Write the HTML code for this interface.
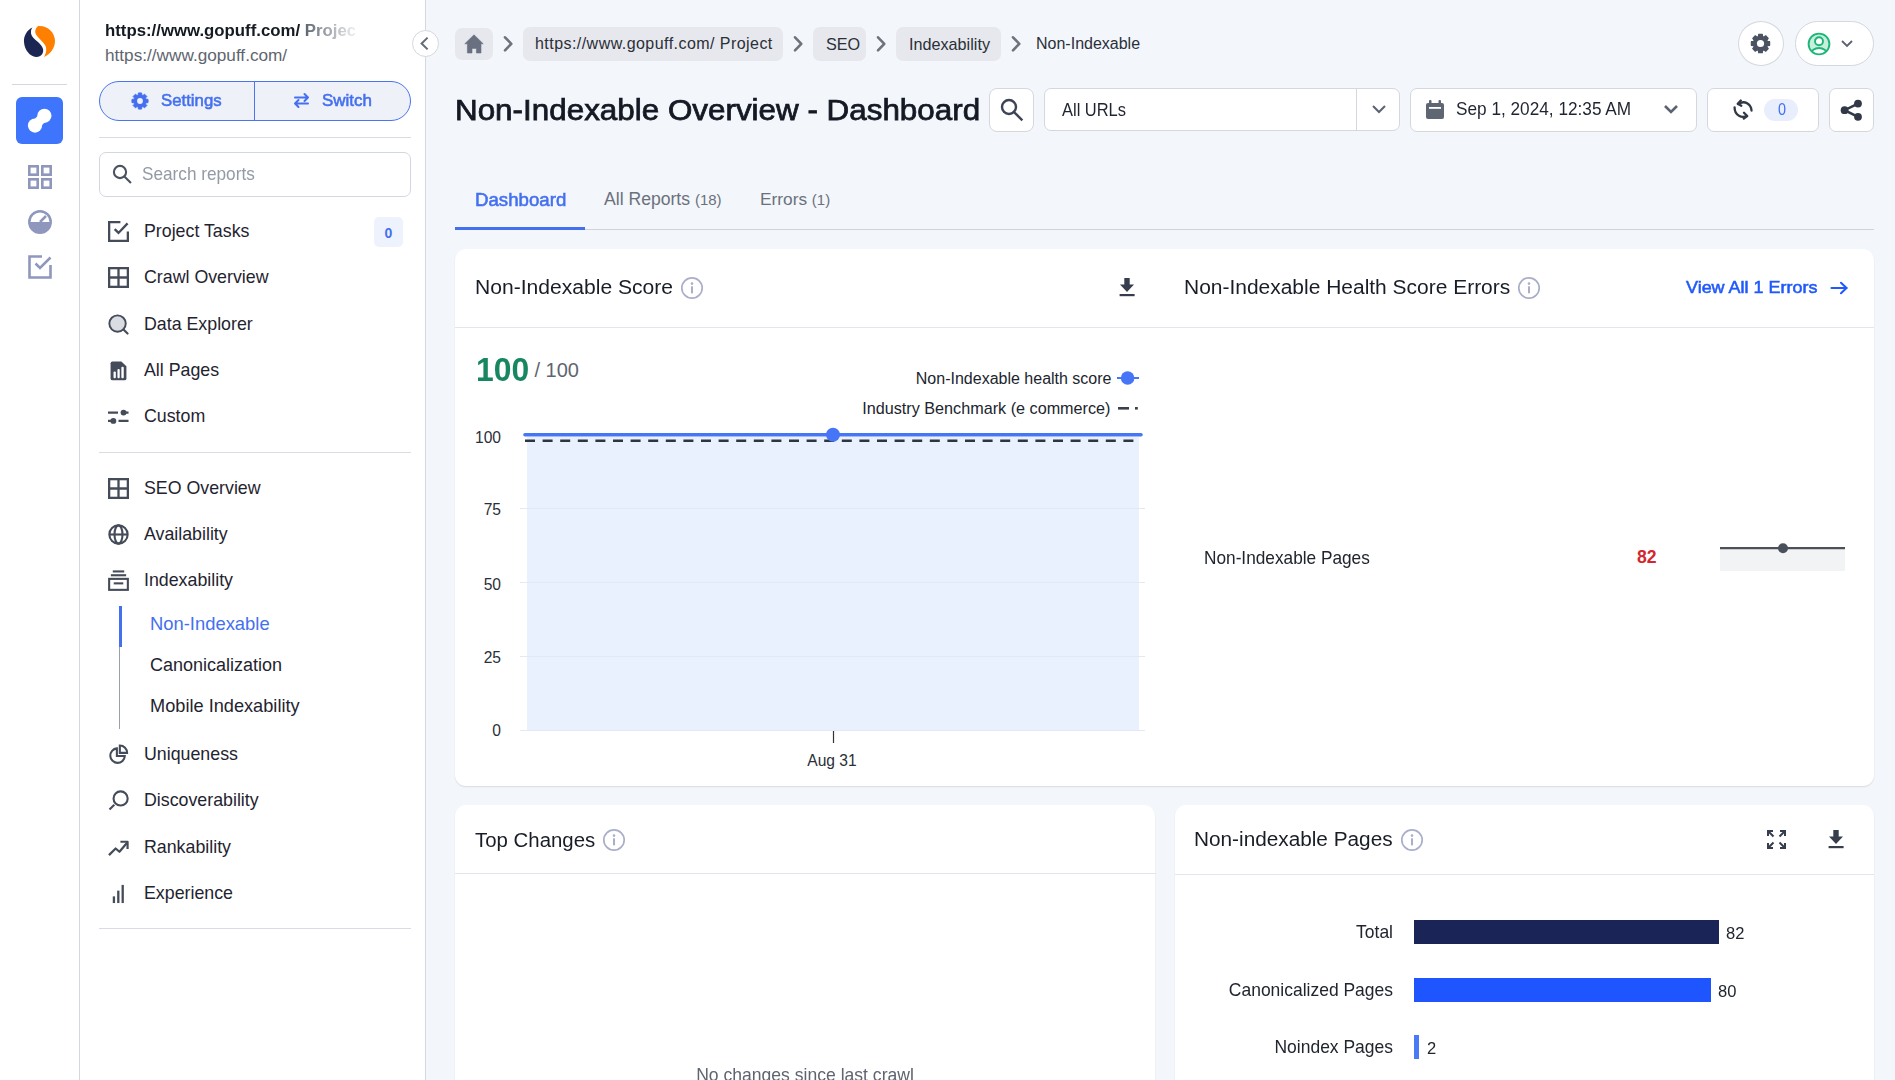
<!DOCTYPE html>
<html><head><meta charset="utf-8">
<style>
*{box-sizing:border-box;margin:0;padding:0}
html,body{width:1895px;height:1080px;overflow:hidden;background:#f3f6fb;font-family:"Liberation Sans",sans-serif;color:#1f2330}
.abs{position:absolute}
.t{position:absolute;white-space:nowrap;line-height:1}
</style></head>
<body>
<div class="abs" style="left:0px;top:0px;width:80px;height:1080px;background:#fff;border-right:1px solid #d4d7de"></div>
<div class="abs" style="left:80px;top:0px;width:346px;height:1080px;background:#fff;border-right:1px solid #d4d7de"></div>
<svg class="abs" style="left:23px;top:25px" width="33" height="33" viewBox="0 0 33 33"><path fill="#1c2653" d="M9.5 2.5 C4 5 0.5 11 1 17 C1.5 25 7 31.5 13 32 C18 32.3 21 28 20 24 C19 20 15 17 12 14.5 C9 12 7.5 9 8 6 C8.2 4.5 8.8 3.2 9.5 2.5 Z"/>
<path fill="#ff7f00" d="M15 1 C24 0 32 7 32 16 C32 23 27.5 29 21 32 C23.5 28 24 23 22 20 C20 17 16.5 14 14 11 C11.5 8 11.5 4 15 1 Z"/></svg>
<div class="abs" style="left:12px;top:84px;width:55px;height:1px;background:#d4d7de"></div>
<div class="abs" style="left:16px;top:97px;width:47px;height:47px;background:#3f74fc;border-radius:6px"></div>
<svg class="abs" style="left:27px;top:108px" width="26" height="26" viewBox="0 0 26 26"><g fill="#fff"><circle cx="8" cy="17.6" r="7.1"/><circle cx="17.4" cy="7.8" r="7.1"/></g><path d="M8 17.6 L17.4 7.8" stroke="#fff" stroke-width="9.5"/></svg>
<svg class="abs" style="left:28px;top:165px" width="24" height="24" viewBox="0 0 24 24"><g fill="none" stroke="#8f97bd" stroke-width="2.6"><rect x="1.3" y="1.3" width="8.4" height="8.4"/><rect x="14.3" y="1.3" width="8.4" height="8.4"/><rect x="1.3" y="14.3" width="8.4" height="8.4"/><rect x="14.3" y="14.3" width="8.4" height="8.4"/></g></svg>
<svg class="abs" style="left:28px;top:210px" width="24" height="24" viewBox="0 0 24 24"><circle cx="12" cy="12" r="10.7" fill="none" stroke="#8f97bd" stroke-width="2.5"/><path d="M1 12 A11 11 0 0 0 23 12 Z" fill="#8f97bd"/><path d="M12 12 L18 6" stroke="#8f97bd" stroke-width="2.5"/></svg>
<svg class="abs" style="left:28px;top:255px" width="24" height="24" viewBox="0 0 24 24"><path d="M14 1.5 H1.5 V22.5 H22.5 V10" fill="none" stroke="#8f97bd" stroke-width="2.6"/><path d="M7.5 8.5 L12 13 L22.5 2.5" fill="none" stroke="#8f97bd" stroke-width="2.6"/></svg>
<div class="t" style="left:105px;top:23.3px;font-size:16.8px;font-weight:700;color:#151a23;line-height:1;width:250px;overflow:hidden;-webkit-mask-image:linear-gradient(90deg,#000 200px,rgba(0,0,0,0.1) 250px)">https://www.gopuff.com/ <span style="color:#5f6570">Project</span></div>
<div class="t" style="left:105px;top:46.94px;font-size:17.2px;color:#5f6570;">https://www.gopuff.com/</div>
<div class="abs" style="left:412px;top:30px;width:27px;height:27px;background:#fff;border:1px solid #d4d7de;border-radius:50%"></div>
<svg class="abs" style="left:419px;top:36px" width="14" height="15" viewBox="0 0 14 15"><path d="M8.6 1.6 L2.6 7.5 L8.6 13.4" fill="none" stroke="#636a78" stroke-width="2"/></svg>
<div class="abs" style="left:99px;top:81px;width:312px;height:40px;background:#eef1f7;border:1px solid #4a74f0;border-radius:20px"></div>
<div class="abs" style="left:254px;top:81px;width:1px;height:40px;background:#4a74f0"></div>
<svg class="abs" style="left:131px;top:92px" width="18" height="18" viewBox="0 0 18 18"><path d="M7.20 3.07 L7.40 0.96 L10.60 0.96 L10.80 3.07 L11.92 3.53 L13.56 2.18 L15.82 4.44 L14.47 6.08 L14.93 7.20 L17.04 7.40 L17.04 10.60 L14.93 10.80 L14.47 11.92 L15.82 13.56 L13.56 15.82 L11.92 14.47 L10.80 14.93 L10.60 17.04 L7.40 17.04 L7.20 14.93 L6.08 14.47 L4.44 15.82 L2.18 13.56 L3.53 11.92 L3.07 10.80 L0.96 10.60 L0.96 7.40 L3.07 7.20 L3.53 6.08 L2.18 4.44 L4.44 2.18 L6.08 3.53 Z" fill="#4470f0" stroke="#4470f0" stroke-width="1" stroke-linejoin="round"/><circle cx="9" cy="9" r="2.9" fill="#eef1f7"/></svg>
<div class="t" style="left:161px;top:92.96px;font-size:16px;color:#4470f0;transform:scaleX(1.048);transform-origin:left center;-webkit-text-stroke:0.55px #4470f0;">Settings</div>
<svg class="abs" style="left:292px;top:91px" width="19" height="19" viewBox="0 0 19 19"><g fill="none" stroke="#4470f0" stroke-width="2" stroke-linecap="round" stroke-linejoin="round"><path d="M3 6.5 H16 M12.5 3 L16 6.5 L12.5 10"/><path d="M16 12.5 H3 M6.5 9 L3 12.5 L6.5 16"/></g></svg>
<div class="t" style="left:322px;top:92.96px;font-size:16px;color:#4470f0;transform:scaleX(1.06);transform-origin:left center;-webkit-text-stroke:0.55px #4470f0;">Switch</div>
<div class="abs" style="left:99px;top:137px;width:312px;height:1px;background:#d9dce3"></div>
<div class="abs" style="left:99px;top:152px;width:312px;height:45px;background:#fff;border:1px solid #d3d7df;border-radius:7px"></div>
<svg class="abs" style="left:112px;top:164px" width="20" height="20" viewBox="0 0 20 20"><g fill="none" stroke="#4b5260" stroke-width="2.1"><circle cx="8" cy="8" r="6.1"/><path d="M12.4 12.4 L18.2 18.2" stroke-linecap="square"/></g></svg>
<div class="t" style="left:141.5px;top:165.02px;font-size:18.4px;color:#949aa5;transform:scaleX(0.935);transform-origin:left center;">Search reports</div>
<svg class="abs" style="left:108px;top:221px" width="21" height="21" viewBox="0 0 22 22"><path d="M13 1.2 H1.2 V20.8 H20.8 V11" fill="none" stroke="#454c59" stroke-width="2.4"/><path d="M7 8.5 L11 12.5 L20.5 2.5" fill="none" stroke="#454c59" stroke-width="2.4"/></svg>
<div class="t" style="left:144px;top:223.13px;font-size:17.8px;color:#1f2430;">Project Tasks</div>
<svg class="abs" style="left:108px;top:267px" width="21" height="21" viewBox="0 0 22 22"><g fill="none" stroke="#454c59" stroke-width="2.4"><rect x="1.2" y="1.2" width="19.6" height="19.6"/><path d="M11 1 V21 M1 11 H21"/></g></svg>
<div class="t" style="left:144px;top:268.93px;font-size:17.8px;color:#1f2430;">Crawl Overview</div>
<svg class="abs" style="left:108px;top:314px" width="21" height="21" viewBox="0 0 22 22"><circle cx="10" cy="10" r="8.6" fill="#d9dce2" stroke="#454c59" stroke-width="2"/><path d="M16.2 16.2 L20.5 20.5" stroke="#454c59" stroke-width="2.2" stroke-linecap="round"/></svg>
<div class="t" style="left:144px;top:315.53px;font-size:17.8px;color:#1f2430;">Data Explorer</div>
<svg class="abs" style="left:108px;top:360px" width="21" height="21" viewBox="0 0 22 22"><path d="M5 1.5 H14 L19.3 6.5 V19.3 Q19.3 21.3 17.3 21.3 H4.7 Q2.7 21.3 2.7 19.3 V3.5 Q2.7 1.5 4.7 1.5 Z" fill="#454c59"/><g fill="#fff"><rect x="5.8" y="12" width="2.4" height="7" rx="1"/><rect x="9.9" y="9.5" width="2.4" height="9.5" rx="1"/><rect x="14" y="7" width="2.5" height="12" rx="1"/></g></svg>
<div class="t" style="left:144px;top:361.73px;font-size:17.8px;color:#1f2430;">All Pages</div>
<svg class="abs" style="left:108px;top:406px" width="21" height="21" viewBox="0 0 22 22"><g stroke="#454c59" stroke-width="2.3" fill="#454c59"><path d="M0 6.9 H10.5 M15 6.9 H21.5"/><path d="M0 15.6 H4 M11 15.6 H21.5"/><circle cx="16.3" cy="6.9" r="3.1" stroke-width="0"/><circle cx="5.6" cy="15.6" r="3.1" stroke-width="0"/></g></svg>
<div class="t" style="left:144px;top:407.93px;font-size:17.8px;color:#1f2430;">Custom</div>
<svg class="abs" style="left:108px;top:478px" width="21" height="21" viewBox="0 0 22 22"><g fill="none" stroke="#454c59" stroke-width="2.4"><rect x="1.2" y="1.2" width="19.6" height="19.6"/><path d="M11 1 V21 M1 11 H21"/></g></svg>
<div class="t" style="left:144px;top:479.93px;font-size:17.8px;color:#1f2430;">SEO Overview</div>
<svg class="abs" style="left:108px;top:524px" width="21" height="21" viewBox="0 0 22 22"><g fill="none" stroke="#454c59" stroke-width="2.2"><circle cx="11" cy="11" r="9.6"/><ellipse cx="11" cy="11" rx="4.2" ry="9.6"/><path d="M1.5 11 H20.5"/></g></svg>
<div class="t" style="left:144px;top:525.53px;font-size:17.8px;color:#1f2430;">Availability</div>
<svg class="abs" style="left:108px;top:570px" width="21" height="21" viewBox="0 0 22 22"><g fill="none" stroke="#454c59" stroke-width="2.2"><path d="M5 1.5 H17"/><path d="M3 5.5 H19"/><rect x="1.2" y="9.3" width="19.6" height="11.5"/><path d="M6 14 H16"/></g></svg>
<div class="t" style="left:144px;top:571.93px;font-size:17.8px;color:#1f2430;">Indexability</div>
<svg class="abs" style="left:108px;top:744px" width="21" height="21" viewBox="0 0 22 22"><g fill="none" stroke="#454c59" stroke-width="2.2"><path d="M9.3 4.6 A7.6 7.6 0 1 0 17.6 12.6 H9.3 Z"/><path d="M12.4 1.6 A7.6 7.6 0 0 1 20 9.3 H12.4 Z"/></g></svg>
<div class="t" style="left:144px;top:746.13px;font-size:17.8px;color:#1f2430;">Uniqueness</div>
<svg class="abs" style="left:108px;top:790px" width="21" height="21" viewBox="0 0 22 22"><g fill="none" stroke="#454c59" stroke-width="2.2"><circle cx="13.2" cy="8.8" r="7.4"/><path d="M6.6 15.4 L1.6 20.4" stroke-linecap="butt"/></g></svg>
<div class="t" style="left:144px;top:792.33px;font-size:17.8px;color:#1f2430;">Discoverability</div>
<svg class="abs" style="left:108px;top:837px" width="21" height="21" viewBox="0 0 22 22"><g fill="none" stroke="#454c59" stroke-width="2.3" stroke-linejoin="round"><path d="M1 19 L8 12 L12 15.5 L20 6"/><path d="M13 5 H20.5 V12.5"/></g></svg>
<div class="t" style="left:144px;top:838.53px;font-size:17.8px;color:#1f2430;">Rankability</div>
<svg class="abs" style="left:108px;top:883px" width="21" height="21" viewBox="0 0 22 22"><g fill="#454c59"><rect x="5" y="14" width="2.4" height="7"/><rect x="9.6" y="8" width="2.4" height="13"/><rect x="14.2" y="2" width="2.4" height="19"/></g></svg>
<div class="t" style="left:144px;top:885.13px;font-size:17.8px;color:#1f2430;">Experience</div>
<div class="abs" style="left:374px;top:217px;width:29px;height:30px;background:#eef2fd;border-radius:5px"></div>
<div class="t" style="left:88.5px;width:600px;text-align:center;top:226.15px;font-size:14px;color:#4470f0;font-weight:700;">0</div>
<div class="abs" style="left:99px;top:452px;width:312px;height:1px;background:#d9dce3"></div>
<div class="abs" style="left:99px;top:928px;width:312px;height:1px;background:#d9dce3"></div>
<div class="abs" style="left:119px;top:647px;width:1px;height:82px;background:#9aa0ab"></div>
<div class="abs" style="left:119px;top:606px;width:3px;height:41px;background:#4470f0"></div>
<div class="t" style="left:150px;top:614.62px;font-size:18.4px;color:#4470f0;">Non-Indexable</div>
<div class="t" style="left:150px;top:655.96px;font-size:18.0px;color:#1f2430;">Canonicalization</div>
<div class="t" style="left:150px;top:696.59px;font-size:18.2px;color:#1f2430;">Mobile Indexability</div>
<div class="abs" style="left:455px;top:28px;width:38px;height:32px;background:#e6e8ed;border-radius:7px"></div>
<svg class="abs" style="left:464px;top:33px" width="20" height="21" viewBox="0 0 20 21"><path d="M10 1.8 L0.8 10.8 H3.4 V20 H8 V15.4 H12.4 V20 H17 V10.8 H19.2 Z" fill="#697080" stroke="#697080" stroke-width="0.6" stroke-linejoin="round"/></svg>
<svg class="abs" style="left:502px;top:35px" width="12" height="18" viewBox="0 0 12 18"><path d="M3 2.3 L9.3 8.8 L3 15.3" fill="none" stroke="#6e727a" stroke-width="2.6" stroke-linecap="round" stroke-linejoin="round"/></svg>
<div class="abs" style="left:523px;top:27px;width:260px;height:34px;background:#e6e8ed;border-radius:7px"></div>
<div class="t" style="left:535px;top:36.26px;font-size:16px;color:#2b2f38;letter-spacing:0.45px;">https://www.gopuff.com/ Project</div>
<svg class="abs" style="left:792px;top:35px" width="12" height="18" viewBox="0 0 12 18"><path d="M3 2.3 L9.3 8.8 L3 15.3" fill="none" stroke="#6e727a" stroke-width="2.6" stroke-linecap="round" stroke-linejoin="round"/></svg>
<div class="abs" style="left:813px;top:27px;width:53px;height:34px;background:#e6e8ed;border-radius:7px"></div>
<div class="t" style="left:826px;top:36.09px;font-size:16.2px;color:#2b2f38;">SEO</div>
<svg class="abs" style="left:875px;top:35px" width="12" height="18" viewBox="0 0 12 18"><path d="M3 2.3 L9.3 8.8 L3 15.3" fill="none" stroke="#6e727a" stroke-width="2.6" stroke-linecap="round" stroke-linejoin="round"/></svg>
<div class="abs" style="left:896px;top:27px;width:105px;height:34px;background:#e6e8ed;border-radius:7px"></div>
<div class="t" style="left:909px;top:36.09px;font-size:16.2px;color:#2b2f38;">Indexability</div>
<svg class="abs" style="left:1010px;top:35px" width="12" height="18" viewBox="0 0 12 18"><path d="M3 2.3 L9.3 8.8 L3 15.3" fill="none" stroke="#6e727a" stroke-width="2.6" stroke-linecap="round" stroke-linejoin="round"/></svg>
<div class="t" style="left:1036px;top:36.26px;font-size:16px;color:#2b2f38;">Non-Indexable</div>
<div class="abs" style="left:1738px;top:21px;width:46px;height:45px;background:#fff;border:1px solid #d4d7de;border-radius:50%"></div>
<svg class="abs" style="left:1750px;top:33px" width="21" height="21" viewBox="0 0 21 21"><path d="M8.41 3.61 L8.69 1.38 L12.31 1.38 L12.59 3.61 L13.89 4.15 L15.67 2.77 L18.23 5.33 L16.85 7.11 L17.39 8.41 L19.62 8.69 L19.62 12.31 L17.39 12.59 L16.85 13.89 L18.23 15.67 L15.67 18.23 L13.89 16.85 L12.59 17.39 L12.31 19.62 L8.69 19.62 L8.41 17.39 L7.11 16.85 L5.33 18.23 L2.77 15.67 L4.15 13.89 L3.61 12.59 L1.38 12.31 L1.38 8.69 L3.61 8.41 L4.15 7.11 L2.77 5.33 L5.33 2.77 L7.11 4.15 Z" fill="#4b5260" stroke="#4b5260" stroke-width="1.2" stroke-linejoin="round"/><circle cx="10.5" cy="10.5" r="3.6" fill="#fff"/></svg>
<div class="abs" style="left:1795px;top:21px;width:79px;height:45px;background:#fff;border:1px solid #d4d7de;border-radius:23px"></div>
<svg class="abs" style="left:1807px;top:32px" width="24" height="24" viewBox="0 0 24 24"><defs><clipPath id="av"><circle cx="12" cy="12" r="10.4"/></clipPath></defs><circle cx="12" cy="12" r="10.4" fill="#c8efde"/><g clip-path="url(#av)"><ellipse cx="12" cy="22" rx="8" ry="6" fill="#fff" stroke="#1db676" stroke-width="1.9"/></g><circle cx="12" cy="9.3" r="4" fill="#fff" stroke="#1db676" stroke-width="1.9"/><circle cx="12" cy="12" r="10.4" fill="none" stroke="#1db676" stroke-width="1.9"/></svg>
<svg class="abs" style="left:1840px;top:38px" width="14" height="12" viewBox="0 0 14 12"><path d="M2 3 L7 8 L12 3" fill="none" stroke="#5b6270" stroke-width="1.8"/></svg>
<div class="t" style="left:455px;top:96.22px;font-size:28.8px;color:#141924;transform:scaleX(1.09);transform-origin:left center;-webkit-text-stroke:0.75px #141924;">Non-Indexable Overview - Dashboard</div>
<div class="abs" style="left:989px;top:88px;width:45px;height:44px;background:#fff;border:1px solid #d4d7de;border-radius:8px"></div>
<svg class="abs" style="left:1000px;top:98px" width="24" height="24" viewBox="0 0 24 24"><g fill="none" stroke="#3d4554" stroke-width="2.4"><circle cx="9" cy="9" r="7"/><path d="M14 14 L21.5 21.5" stroke-linecap="square"/></g></svg>
<div class="abs" style="left:1044px;top:88px;width:356px;height:43px;background:#fff;border:1px solid #d4d7de;border-radius:7px"></div>
<div class="abs" style="left:1356px;top:89px;width:1px;height:41px;background:#d4d7de"></div>
<div class="t" style="left:1062px;top:101.31px;font-size:18.3px;color:#1f2430;transform:scaleX(0.9);transform-origin:left center;">All URLs</div>
<svg class="abs" style="left:1371px;top:103px" width="16" height="12" viewBox="0 0 16 12"><path d="M2 3 L8 9 L14 3" fill="none" stroke="#5b6270" stroke-width="2"/></svg>
<div class="abs" style="left:1410px;top:88px;width:287px;height:44px;background:#fff;border:1px solid #d4d7de;border-radius:7px"></div>
<svg class="abs" style="left:1424px;top:98.5px" width="21" height="21" viewBox="0 0 21 21"><path d="M4 4 H18 Q20 4 20 6 V18 Q20 20 18 20 H4 Q2 20 2 18 V6 Q2 4 4 4 Z" fill="#5e6573"/><rect x="5" y="1" width="2.5" height="5" rx="1" fill="#5e6573"/><rect x="14.5" y="1" width="2.5" height="5" rx="1" fill="#5e6573"/><rect x="5" y="8" width="12" height="1.8" fill="#fff"/></svg>
<div class="t" style="left:1456px;top:101.05px;font-size:17.9px;color:#1f2430;transform:scaleX(0.962);transform-origin:left center;">Sep 1, 2024, 12:35 AM</div>
<svg class="abs" style="left:1663px;top:103px" width="16" height="12" viewBox="0 0 16 12"><path d="M2 3 L8 9 L14 3" fill="none" stroke="#5b6270" stroke-width="2.6"/></svg>
<div class="abs" style="left:1707px;top:88px;width:112px;height:44px;background:#fff;border:1px solid #d4d7de;border-radius:7px"></div>
<svg class="abs" style="left:1733px;top:99px" width="20" height="21" viewBox="0 0 20 21"><g fill="none" stroke="#323946" stroke-width="2.3" stroke-linecap="round" stroke-linejoin="round"><path d="M5 5 Q10 1.8 14.5 4.5 Q18.3 7 18.5 11.5"/><path d="M7.8 1.5 L4.8 4.8 L8.3 6.8"/><path d="M1.6 8.5 Q1.5 14 6 16.8 Q9.5 18.8 13.8 17"/><path d="M11 13.8 L14.2 17 L10.8 19.5"/></g></svg>
<div class="abs" style="left:1764px;top:99px;width:34px;height:22px;background:#e8eefc;border-radius:11px"></div>
<div class="t" style="left:1481.7px;width:600px;text-align:center;top:101.76px;font-size:16px;color:#3f6ff5;transform:scaleX(0.9);transform-origin:center center;">0</div>
<div class="abs" style="left:1829px;top:88px;width:45px;height:44px;background:#fff;border:1px solid #d4d7de;border-radius:7px"></div>
<svg class="abs" style="left:1840px;top:99px" width="23" height="23" viewBox="0 0 23 23"><g fill="#323946"><circle cx="18" cy="4.6" r="3.9"/><circle cx="4.6" cy="11.2" r="3.9"/><circle cx="18" cy="17.8" r="3.9"/></g><path d="M18 4.6 L4.6 11.2 L18 17.8" fill="none" stroke="#323946" stroke-width="2.5"/></svg>
<div class="abs" style="left:455px;top:229px;width:1419px;height:1px;background:#cfd3dc"></div>
<div class="abs" style="left:455px;top:227px;width:130px;height:3px;background:#4470f0"></div>
<div class="t" style="left:474.5px;top:190.76px;font-size:18px;color:#4470f0;transform:scaleX(1.037);transform-origin:left center;-webkit-text-stroke:0.55px #4470f0;">Dashboard</div>
<div class="t" style="left:604px;top:191.10px;font-size:17.6px;color:#6b717c;">All Reports <span style="font-size:15px">(18)</span></div>
<div class="t" style="left:760px;top:191.36px;font-size:17.3px;color:#6b717c;">Errors <span style="font-size:15px">(1)</span></div>
<div class="abs" style="left:455px;top:249px;width:1419px;height:537px;background:#fff;border-radius:11px;box-shadow:0 1px 1.5px rgba(30,35,45,0.13)"></div>
<div class="abs" style="left:455px;top:327px;width:1419px;height:1px;background:#e3e6ec"></div>
<div class="t" style="left:474.5px;top:277.79px;font-size:19.5px;color:#181d27;transform:scaleX(1.081);transform-origin:left center;">Non-Indexable Score</div>
<svg class="abs" style="left:679.5px;top:275.5px" width="24" height="24" viewBox="0 0 24 24"><circle cx="12" cy="12" r="10.2" fill="none" stroke="#a9afc9" stroke-width="1.7"/><circle cx="12" cy="7.6" r="1.3" fill="#a9afc9"/><rect x="11" y="10.3" width="2" height="7" fill="#a9afc9"/></svg>
<svg class="abs" style="left:1117px;top:277px" width="20" height="20" viewBox="0 0 20 20"><g fill="#363e4e"><path d="M7.3 1 H12.7 V7.4 H17 L10 15 L3 7.4 H7.3 Z"/><rect x="2.6" y="17" width="15" height="2.2"/></g></svg>
<div class="t" style="left:1183.5px;top:277.79px;font-size:19.5px;color:#181d27;transform:scaleX(1.075);transform-origin:left center;">Non-Indexable Health Score Errors</div>
<svg class="abs" style="left:1516.5px;top:275.5px" width="24" height="24" viewBox="0 0 24 24"><circle cx="12" cy="12" r="10.2" fill="none" stroke="#a9afc9" stroke-width="1.7"/><circle cx="12" cy="7.6" r="1.3" fill="#a9afc9"/><rect x="11" y="10.3" width="2" height="7" fill="#a9afc9"/></svg>
<div class="t" style="left:1686px;top:278.91px;font-size:17px;color:#2159fb;transform:scaleX(1.056);transform-origin:left center;-webkit-text-stroke:0.55px #2159fb;">View All 1 Errors</div>
<svg class="abs" style="left:1829px;top:280px" width="20" height="16" viewBox="0 0 20 16"><g fill="none" stroke="#2159fb" stroke-width="2.1" stroke-linecap="round" stroke-linejoin="round"><path d="M2.5 8 H17.5"/><path d="M12 2.8 L17.5 8 L12 13.2"/></g></svg>
<div class="t" style="left:475.5px;top:353.04px;font-size:33.5px;color:#17875f;font-weight:700;transform:scaleX(0.95);transform-origin:left center;">100</div>
<div class="t" style="left:534.5px;top:360.07px;font-size:20px;color:#5f6570;">/ 100</div>
<div class="t" style="left:511.5px;width:600px;text-align:right;top:371.16px;font-size:16px;color:#20252e;">Non-Indexable health score</div>
<svg class="abs" style="left:1115px;top:370px" width="26" height="16" viewBox="0 0 26 16"><path d="M2 8 H24" stroke="#4676f6" stroke-width="2"/><circle cx="12.6" cy="8" r="6.8" fill="#4676f6"/></svg>
<div class="t" style="left:510.5px;width:600px;text-align:right;top:399.69px;font-size:16.2px;color:#20252e;">Industry Benchmark (e commerce)</div>
<svg class="abs" style="left:1117px;top:404px" width="24" height="8" viewBox="0 0 24 8"><rect x="1" y="3" width="11" height="2.6" fill="#3a404c"/><rect x="18" y="3" width="2.8" height="2.6" fill="#3a404c"/></svg>
<svg class="abs" style="left:455px;top:420px" width="720" height="360" viewBox="455 420 720 360">
<rect x="527" y="437" width="612" height="293" fill="#e9f0fe"/>
<g stroke="#e4e8f2" stroke-width="1"><path d="M520 508.5 H1145"/><path d="M520 582.5 H1145"/><path d="M520 656.5 H1145"/><path d="M520 730.5 H1145"/></g>
<path d="M525 440.8 H1140" stroke="#2f3540" stroke-width="2.6" stroke-dasharray="10 7.6"/>
<path d="M525 434.8 H1141" stroke="#4676f6" stroke-width="3.6" stroke-linecap="round"/>
<circle cx="833" cy="434.8" r="7" fill="#4676f6"/>
<path d="M833.5 731 V743" stroke="#333" stroke-width="1.2"/>
</svg>
<div class="t" style="left:-99px;width:600px;text-align:right;top:429.79px;font-size:15.6px;color:#2a2f38;">100</div>
<div class="t" style="left:-99px;width:600px;text-align:right;top:502.39px;font-size:15.6px;color:#2a2f38;">75</div>
<div class="t" style="left:-99px;width:600px;text-align:right;top:576.59px;font-size:15.6px;color:#2a2f38;">50</div>
<div class="t" style="left:-99px;width:600px;text-align:right;top:650.19px;font-size:15.6px;color:#2a2f38;">25</div>
<div class="t" style="left:-99px;width:600px;text-align:right;top:722.99px;font-size:15.6px;color:#2a2f38;">0</div>
<div class="t" style="left:532px;width:600px;text-align:center;top:752.79px;font-size:15.6px;color:#2a2f38;">Aug 31</div>
<div class="t" style="left:1204px;top:548.79px;font-size:18.2px;color:#20252e;transform:scaleX(0.948);transform-origin:left center;">Non-Indexable Pages</div>
<div class="t" style="left:1637px;top:549.10px;font-size:17.6px;color:#d3262f;font-weight:700;">82</div>
<div class="abs" style="left:1720px;top:548px;width:125px;height:23px;background:#f2f3f5"></div>
<svg class="abs" style="left:1718px;top:540px" width="130" height="16" viewBox="0 0 130 16"><path d="M2 8.2 H127" stroke="#4b515b" stroke-width="2.2"/><circle cx="65" cy="8.2" r="5" fill="#4b515b"/></svg>
<div class="abs" style="left:455px;top:805px;width:700px;height:300px;background:#fff;border-radius:11px;box-shadow:0 1px 1.5px rgba(30,35,45,0.13)"></div>
<div class="abs" style="left:455px;top:873px;width:701px;height:1px;background:#e3e6ec"></div>
<div class="t" style="left:474.5px;top:830.79px;font-size:19.5px;color:#181d27;transform:scaleX(1.046);transform-origin:left center;">Top Changes</div>
<svg class="abs" style="left:601.5px;top:827.5px" width="24" height="24" viewBox="0 0 24 24"><circle cx="12" cy="12" r="10.2" fill="none" stroke="#a9afc9" stroke-width="1.7"/><circle cx="12" cy="7.6" r="1.3" fill="#a9afc9"/><rect x="11" y="10.3" width="2" height="7" fill="#a9afc9"/></svg>
<div class="t" style="left:505px;width:600px;text-align:center;top:1065.62px;font-size:18.4px;color:#5f6570;transform:scaleX(0.955);transform-origin:center center;">No changes since last crawl</div>
<div class="abs" style="left:1175px;top:805px;width:699px;height:300px;background:#fff;border-radius:11px;box-shadow:0 1px 1.5px rgba(30,35,45,0.13)"></div>
<div class="abs" style="left:1175px;top:874px;width:699px;height:1px;background:#e3e6ec"></div>
<div class="t" style="left:1194px;top:830.49px;font-size:19.5px;color:#181d27;transform:scaleX(1.065);transform-origin:left center;">Non-indexable Pages</div>
<svg class="abs" style="left:1399.5px;top:827.5px" width="24" height="24" viewBox="0 0 24 24"><circle cx="12" cy="12" r="10.2" fill="none" stroke="#a9afc9" stroke-width="1.7"/><circle cx="12" cy="7.6" r="1.3" fill="#a9afc9"/><rect x="11" y="10.3" width="2" height="7" fill="#a9afc9"/></svg>
<svg class="abs" style="left:1766px;top:829px" width="21" height="21" viewBox="0 0 21 21"><g fill="none" stroke="#363e4e" stroke-width="2"><path d="M2 7 V2 H7 M2 2 L7.5 7.5"/><path d="M14 2 H19 V7 M19 2 L13.5 7.5"/><path d="M2 14 V19 H7 M2 19 L7.5 13.5"/><path d="M19 14 V19 H14 M19 19 L13.5 13.5"/></g></svg>
<svg class="abs" style="left:1826px;top:829px" width="20" height="20" viewBox="0 0 20 20"><g fill="#363e4e"><path d="M7.3 1 H12.7 V7.4 H17 L10 15 L3 7.4 H7.3 Z"/><rect x="2.6" y="17" width="15" height="2.2"/></g></svg>
<div class="t" style="left:793px;width:600px;text-align:right;top:923.32px;font-size:18.4px;color:#20252e;transform:scaleX(0.95);transform-origin:right center;">Total</div>
<div class="abs" style="left:1414px;top:920px;width:305px;height:24px;background:#1a2456"></div>
<div class="t" style="left:1726px;top:925.17px;font-size:17.4px;color:#20252e;transform:scaleX(0.95);transform-origin:left center;">82</div>
<div class="t" style="left:793px;width:600px;text-align:right;top:980.82px;font-size:18.4px;color:#20252e;transform:scaleX(0.95);transform-origin:right center;">Canonicalized Pages</div>
<div class="abs" style="left:1414px;top:978px;width:297px;height:24px;background:#1f55ff"></div>
<div class="t" style="left:1718px;top:982.67px;font-size:17.4px;color:#20252e;transform:scaleX(0.95);transform-origin:left center;">80</div>
<div class="t" style="left:793px;width:600px;text-align:right;top:1038.32px;font-size:18.4px;color:#20252e;transform:scaleX(0.95);transform-origin:right center;">Noindex Pages</div>
<div class="abs" style="left:1414px;top:1035px;width:5px;height:24px;background:#4a7af5"></div>
<div class="t" style="left:1427px;top:1040.17px;font-size:17.4px;color:#20252e;transform:scaleX(0.95);transform-origin:left center;">2</div>
</body></html>
